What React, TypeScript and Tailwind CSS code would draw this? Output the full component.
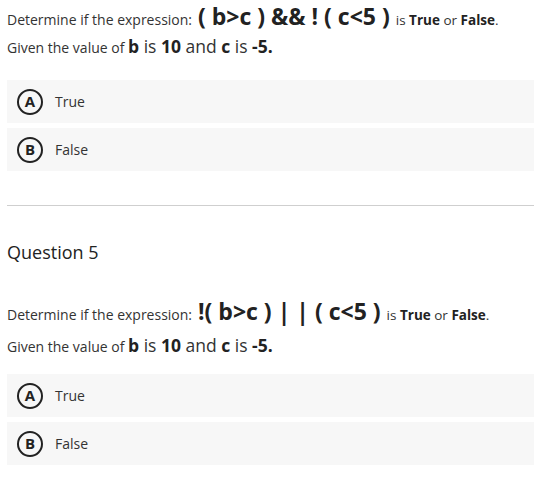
import React from "react";

const font = { fontFamily: '"Open Sans", "Liberation Sans", sans-serif' };

function Option({ letter, label }: { letter: string; label: string }) {
    return (
        <div className="flex items-center h-[43px] bg-[#f7f7f7] pl-[10px]">
            <span className="flex items-center justify-center w-[26px] h-[26px] rounded-full border-2 border-[#222] text-[15px] leading-none font-bold text-[#222]">
                {letter}
            </span>
            <span className="ml-[12px] text-[14px] text-[#333]">{label}</span>
        </div>
    );
}

function Question({ expr, gap }: { expr: React.ReactNode; gap: string }) {
    return (
        <div className="flex flex-col">
            <p className="text-[14px] leading-[30px] text-[#333] whitespace-nowrap">
                Determine if the expression:
                <span className="text-[23px] font-bold text-[#222] leading-none"> {expr} </span>
                <span className="text-[13.5px] leading-none">
                    is <b className="text-[#222]">True</b> or <b className="text-[#222]">False</b>.
                </span>
            </p>
            <p className={`${gap} text-[14px] text-[#333] whitespace-nowrap leading-[24px]`}>
                Given the value of{" "}
                <span className="text-[17.5px] leading-none">
                    <b className="text-[#222]">b</b> is <b className="text-[#222]">10</b> and <b className="text-[#222]">c</b> is{" "}
                    <b className="text-[#222]">-5.</b>
                </span>
            </p>
        </div>
    );
}

export default function App() {
    return (
        <div className="w-[534px] h-[487px] bg-white pl-[7px] pt-[5px] overflow-hidden" style={font}>
            <Question expr={<>( b&gt;c ) &amp;&amp; ! ( c&lt;5 )</>} gap="mt-[1px]" />
            <div className="mt-[20px] flex flex-col gap-[5px]">
                <Option letter="A" label="True" />
                <Option letter="B" label="False" />
            </div>
            <hr className="mt-[34px] border-t border-[#cfcfcf]" />
            <h2 className="mt-[34px] text-[18px] text-[#222] leading-[24px]">Question 5</h2>
            <div className="mt-[36px]">
                <Question expr={<>!( b&gt;c ) | | ( c&lt;5 )</>} gap="mt-[5px]" />
            </div>
            <div className="mt-[15px] flex flex-col gap-[5px]">
                <Option letter="A" label="True" />
                <Option letter="B" label="False" />
            </div>
        </div>
    );
}
